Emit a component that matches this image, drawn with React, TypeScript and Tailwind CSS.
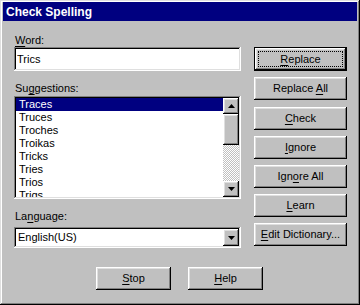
import React from "react";

const raised =
  "shadow-[inset_-1px_-1px_#000,inset_1px_1px_#fff,inset_-2px_-2px_#808080,inset_2px_2px_#dfdfdf]";
const sunken =
  "shadow-[inset_-1px_-1px_#fff,inset_1px_1px_#808080,inset_-2px_-2px_#dfdfdf,inset_2px_2px_#000]";

function U({ children }: { children: React.ReactNode }) {
  return <span className="underline underline-offset-[2px] decoration-1">{children}</span>;
}

function Btn({
  children,
  className = "",
  w = "w-[93px]",
  h = "h-[23px]",
}: {
  children: React.ReactNode;
  className?: string;
  w?: string;
  h?: string;
}) {
  return (
    <div className={`${w} ${h} ${raised} bg-[#c0c0c0] flex items-center justify-center ${className}`}>
      <span>{children}</span>
    </div>
  );
}

function Arrow({ dir }: { dir: "up" | "down" }) {
  return (
    <svg width="7" height="4" viewBox="0 0 7 4" className="block">
      {dir === "up" ? (
        <path d="M3.5 0 L7 4 L0 4 Z" fill="#000" />
      ) : (
        <path d="M0 0 L7 0 L3.5 4 Z" fill="#000" />
      )}
    </svg>
  );
}

const suggestions = ["Traces", "Truces", "Troches", "Troikas", "Tricks", "Tries", "Trios", "Trigs"];

export default function App() {
  return (
    <div
      className={`w-[360px] h-[305px] bg-[#c0c0c0] flex flex-col pt-[2px] px-[3px] text-black text-[11px] leading-[13px] font-['Liberation_Sans',Arial,sans-serif] shadow-[inset_-1px_-1px_#000,inset_1px_1px_#dfdfdf,inset_-2px_-2px_#808080,inset_2px_2px_#fff]`}
    >
      {/* Title bar */}
      <div className="h-[19px] bg-[#000080] text-white font-bold text-[12px] leading-[14px] flex items-center pl-[3px]">
        Check Spelling
      </div>

      {/* Body */}
      <div className="flex mt-[13px] pl-[11px]">
        {/* Left column */}
        <div className="w-[227px] flex flex-col">
          <div className="h-[13px] pl-[1px]">
            <U>W</U>ord:
          </div>
          <div className={`h-[24px] bg-white ${sunken} p-[2px] pl-[3px] flex items-center`}>Trics</div>

          <div className="h-[13px] pl-[1px] mt-[11px]">
            Su<U>g</U>gestions:
          </div>
          <div className={`h-[103px] mt-[1px] bg-white ${sunken} p-[2px] flex`}>
            <div className="flex-1 overflow-hidden flex flex-col">
              {suggestions.map((s, i) => (
                <div
                  key={s}
                  className={`h-[13px] shrink-0 pl-[3px] ${i === 0 ? "bg-[#000080] text-white" : ""}`}
                >
                  {s}
                </div>
              ))}
            </div>
            <div className="w-[16px] flex flex-col">
              <div className={`h-[16px] ${raised} bg-[#c0c0c0] flex items-center justify-center`}>
                <Arrow dir="up" />
              </div>
              <div className={`h-[31px] ${raised} bg-[#c0c0c0]`} />
              <div className="flex-1 bg-[image:repeating-conic-gradient(#c0c0c0_0_25%,#ffffff_0_50%)] bg-[length:2px_2px]" />
              <div className={`h-[16px] ${raised} bg-[#c0c0c0] flex items-center justify-center`}>
                <Arrow dir="down" />
              </div>
            </div>
          </div>

          <div className="h-[13px] pl-[1px] mt-[11px]">
            La<U>n</U>guage:
          </div>
          <div className={`h-[21px] mt-[4px] bg-white ${sunken} p-[2px] flex`}>
            <div className="flex-1 flex items-center pl-[2px]">English(US)</div>
            <div className={`w-[16px] ${raised} bg-[#c0c0c0] flex items-center justify-center`}>
              <Arrow dir="down" />
            </div>
          </div>
        </div>

        {/* Right column */}
        <div className="ml-[13px] mt-[13px] flex flex-col">
          <div className="w-[93px] h-[24px] bg-[#c0c0c0] flex p-[4px] shadow-[inset_0_0_0_1px_#000,inset_-2px_-2px_#000,inset_2px_2px_#fff,inset_-3px_-3px_#808080,inset_3px_3px_#dfdfdf]">
            <div className="flex-1 border border-dotted border-black flex items-center justify-center">
              <span>
                <U>R</U>eplace
              </span>
            </div>
          </div>
          <Btn className="mt-[6px]">
            Replace <U>A</U>ll
          </Btn>
          <Btn className="mt-[7px]">
            <U>C</U>heck
          </Btn>
          <Btn className="mt-[6px]">
            <U>I</U>gnore
          </Btn>
          <Btn className="mt-[6px]">
            Ign<U>o</U>re All
          </Btn>
          <Btn className="mt-[6px]">
            <U>L</U>earn
          </Btn>
          <Btn className="mt-[6px]">
            <U>E</U>dit Dictionary...
          </Btn>
        </div>
      </div>

      {/* Bottom buttons */}
      <div className="flex mt-[19px] ml-[93px] gap-[17px]">
        <Btn w="w-[75px]">
          <U>S</U>top
        </Btn>
        <Btn w="w-[75px]">
          <U>H</U>elp
        </Btn>
      </div>
    </div>
  );
}
